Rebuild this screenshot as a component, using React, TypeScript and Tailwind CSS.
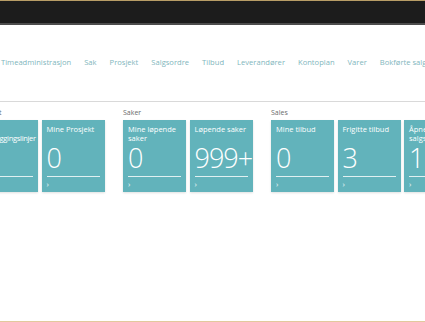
const navItems = [
  'Timeadministrasjon',
  'Sak',
  'Prosjekt',
  'Salgsordre',
  'Tilbud',
  'Leverandører',
  'Kontoplan',
  'Varer',
  'Bokførte salgsfakturaer',
]

type Tile = { title: string; value: string; nowrap?: boolean }
type Group = { label: string; tiles: Tile[] }

const groups: Group[] = [
  {
    label: 'Prosjekt',
    tiles: [
      { title: 'Mine planleggingslinjer', value: '0', nowrap: true },
      { title: 'Mine Prosjekt', value: '0' },
    ],
  },
  {
    label: 'Saker',
    tiles: [
      { title: 'Mine løpende saker', value: '0' },
      { title: 'Løpende saker', value: '999+' },
    ],
  },
  {
    label: 'Sales',
    tiles: [
      { title: 'Mine tilbud', value: '0' },
      { title: 'Frigitte tilbud', value: '3' },
      { title: 'Åpne salgsordrer', value: '11' },
    ],
  },
]

function CueTile({ title, value, nowrap }: Tile) {
  const [first, ...rest] = title.split(' ')
  return (
    <div className="w-[63px] h-[72px] shrink-0 bg-[#62b3bb] px-[5px] pt-[5px] flex flex-col overflow-hidden shadow-[0_1px_2px_rgba(0,0,0,0.12)]">
      <div className="h-[19px] text-[7.5px] leading-[9px] text-white">
        {nowrap ? (
          <>
            <div>{first}</div>
            <div className="whitespace-nowrap tracking-[-0.3px]">{rest.join(' ')}</div>
          </>
        ) : (
          title
        )}
      </div>
      <div className="h-[28px] text-[27px] leading-[28px] font-light text-white whitespace-nowrap tracking-[-1px]">
        {value}
      </div>
      <div className="mt-[4px] h-px bg-white/80" />
      <div className="mt-[3px] text-[8px] leading-[8px] text-white/90">›</div>
    </div>
  )
}

export default function App() {
  return (
    <div
      className="w-[425px] h-[322px] overflow-hidden bg-white flex flex-col"
      style={{ fontFamily: '"Open Sans", "Liberation Sans", sans-serif' }}
    >
      <div className="h-px bg-[#b89d66]" />
      <div className="h-[22px] bg-[#1c1c1c]" />
      <div className="h-[2px] bg-[#4c4c4c]" />

      <div className="h-[76px] flex items-center whitespace-nowrap">
        <div className="flex gap-[13px] ml-[1px] text-[7.6px] text-[#7fb6bd]">
          {navItems.map((n) => (
            <span key={n}>{n}</span>
          ))}
        </div>
      </div>

      <div className="h-px bg-[#d9d9d9]" />

      <div className="flex gap-[18.5px] ml-[-25px] mt-[6px]">
        {groups.map((g) => (
          <div key={g.label} className="shrink-0">
            <div className="h-[12px] text-[7px] leading-[10px] text-[#6b6b6b]">{g.label}</div>
            <div className="flex gap-[3.5px]">
              {g.tiles.map((t) => (
                <CueTile key={t.title} {...t} />
              ))}
            </div>
          </div>
        ))}
      </div>

      <div className="flex-1" />
      <div className="h-px bg-[#e2c99d]" />
    </div>
  )
}
